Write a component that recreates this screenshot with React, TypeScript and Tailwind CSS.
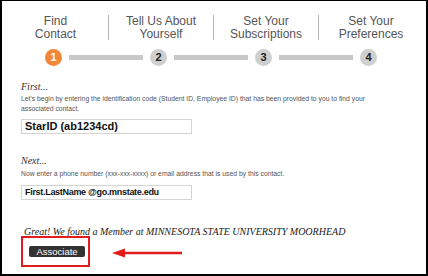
const steps = [
  { label: ['Find', 'Contact'], num: '1', active: true },
  { label: ['Tell Us About', 'Yourself'], num: '2' },
  { label: ['Set Your', 'Subscriptions'], num: '3' },
  { label: ['Set Your', 'Preferences'], num: '4' },
];

function StepCircle({ num, active }: { num: string; active?: boolean }) {
  return (
    <div
      className={`flex h-[17px] w-[17px] shrink-0 items-center justify-center rounded-full text-[11px] leading-none font-bold ${
        active ? 'bg-[#f0883a] text-white' : 'bg-[#cfcfcf] text-[#222]'
      }`}
    >
      {num}
    </div>
  );
}

export default function App() {
  return (
    <div className="h-[276px] w-[428px] overflow-hidden border-2 border-t border-black bg-white font-['Liberation_Sans',Arial,sans-serif]">
      {/* Step headers */}
      <div className="mt-[14px] flex pl-[1px]">
        {steps.map((s, i) => (
          <div key={s.num} className="flex w-[105px] items-start">
            {i > 0 && <div className="h-[25px] w-px shrink-0 bg-[#b5b5b5]" />}
            <div className="flex-1 text-center text-[12px] leading-[13px] text-[#555]">
              <div>{s.label[0]}</div>
              <div>{s.label[1]}</div>
            </div>
          </div>
        ))}
      </div>

      {/* Progress */}
      <div className="mt-[8px] flex h-[17px] items-center gap-[7px] pl-[43px]">
        <StepCircle num="1" active />
        <div className="h-[5px] w-[74px] bg-[#c8c8c8]" />
        <StepCircle num="2" />
        <div className="h-[5px] w-[74px] bg-[#c8c8c8]" />
        <StepCircle num="3" />
        <div className="h-[5px] w-[74px] bg-[#c8c8c8]" />
        <StepCircle num="4" />
      </div>

      <div className="pl-[19px]">
        <p className="mt-[15px] font-['Liberation_Serif',serif] text-[10px] leading-[12px] italic text-[#333]">First...</p>
        <p className="mt-[1px] w-[360px] text-[6.8px] leading-[10px] text-[#555]">
          Let&apos;s begin by entering the identification code (Student ID, Employee ID) that has been provided to you to find your associated contact.
        </p>
        <div className="mt-[5px] flex h-[15px] w-[171px] items-center border border-[#d4d4d4] pl-[3px] text-[11px] font-bold text-[#111]">
          StarID (ab1234cd)
        </div>

        <p className="mt-[21px] font-['Liberation_Serif',serif] text-[10px] leading-[12px] italic text-[#333]">Next...</p>
        <p className="mt-[2px] text-[6.8px] leading-[10px] text-[#555]">
          Now enter a phone number (xxx-xxx-xxxx) or email address that is used by this contact.
        </p>
        <div className="mt-[6px] flex h-[15px] w-[171px] items-center border border-[#d4d4d4] pl-[3px] text-[9px] font-bold tracking-[-0.3px] text-[#111]">
          First.LastName @go.mnstate.edu
        </div>

        <p className="mt-[26px] pl-[3px] font-['Liberation_Serif',serif] text-[10px] leading-[12px] italic text-[#222]">
          Great! We found a Member at MINNESOTA STATE UNIVERSITY MOORHEAD
        </p>

        <div className="-mt-[2px] flex items-center">
          <div className="flex h-[31px] w-[69px] items-center border-2 border-[#e21c1c] pl-[6px]">
            <button className="h-[11px] w-[56px] rounded-[2px] bg-[#333] text-[9.5px] leading-[11px] text-white">
              Associate
            </button>
          </div>
          <svg width="70" height="10" viewBox="0 0 70 10" className="ml-[22px] mt-[2px]">
            <line x1="10" y1="5" x2="70" y2="5" stroke="#e21c1c" strokeWidth="2.5" />
            <polygon points="0,5 13,0.5 13,9.5" fill="#e21c1c" />
          </svg>
        </div>
      </div>
    </div>
  );
}
